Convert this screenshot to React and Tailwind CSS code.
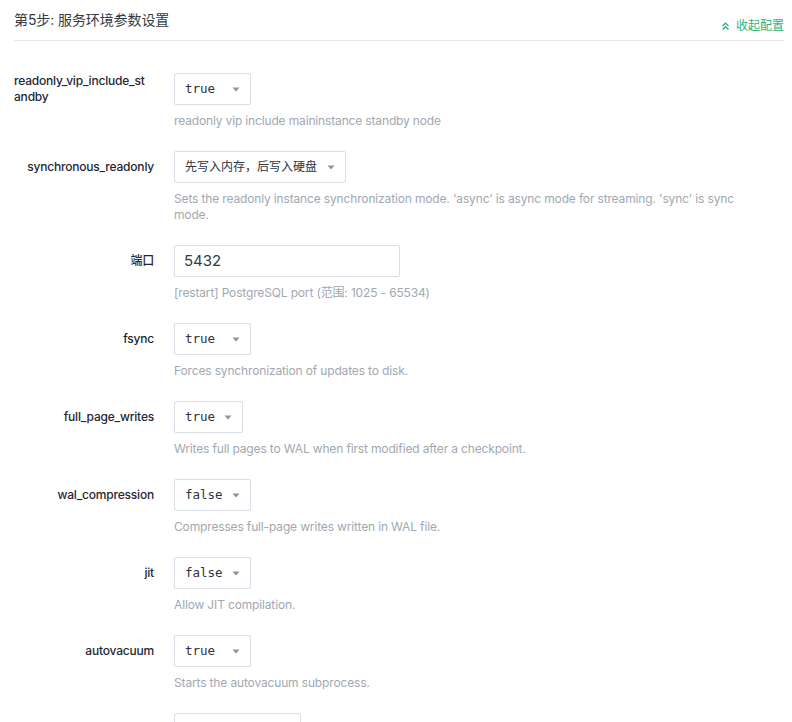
import React from "react";

const FONT = { fontFamily: "Inter, 'Noto Sans CJK SC', sans-serif" };

const params = [
  {
    key: "readonly_vip_include_standby",
    label: "readonly_vip_include_st andby",
    type: "select",
    value: "true",
    width: "w-[77px]",
    desc: "readonly vip include maininstance standby node",
  },
  {
    key: "synchronous_readonly",
    label: "synchronous_readonly",
    type: "select",
    value: "先写入内存，后写入硬盘",
    width: "w-[172px]",
    cjk: true,
    desc: "Sets the readonly instance synchronization mode. 'async' is async mode for streaming. 'sync' is sync mode.",
  },
  {
    key: "port",
    label: "端口",
    type: "input",
    value: "5432",
    desc: "[restart] PostgreSQL port (范围: 1025 - 65534)",
  },
  { key: "fsync", label: "fsync", type: "select", value: "true", width: "w-[77px]", desc: "Forces synchronization of updates to disk." },
  {
    key: "full_page_writes",
    label: "full_page_writes",
    type: "select",
    value: "true",
    width: "w-[69px]",
    desc: "Writes full pages to WAL when first modified after a checkpoint.",
  },
  {
    key: "wal_compression",
    label: "wal_compression",
    type: "select",
    value: "false",
    width: "w-[77px]",
    desc: "Compresses full-page writes written in WAL file.",
  },
  { key: "jit", label: "jit", type: "select", value: "false", width: "w-[77px]", desc: "Allow JIT compilation." },
  { key: "autovacuum", label: "autovacuum", type: "select", value: "true", width: "w-[77px]", desc: "Starts the autovacuum subprocess." },
  { key: "next", label: "", type: "select", value: "", width: "w-[127px]", desc: "" },
];

const Caret = () => (
  <svg width="8" height="5" viewBox="0 0 8 5" className="shrink-0">
    <path d="M0.5 0.5 L7.5 0.5 L4 4.5 Z" fill="#8b939e" />
  </svg>
);

const ChevronsUp = () => (
  <svg width="9" height="9" viewBox="0 0 9 9" fill="none" stroke="#2bb37a" strokeWidth="1.4">
    <path d="M1.5 4 L4.5 1.2 L7.5 4" />
    <path d="M1.5 7.6 L4.5 4.8 L7.5 7.6" />
  </svg>
);

const Field = ({ p }) => {
  if (p.type === "input") {
    return (
      <div className="w-[226px] h-[32px] border border-[#d9dee6] rounded-[2px] px-[9px] flex items-center text-[15px] text-[#333a44]">
        {p.value}
      </div>
    );
  }
  return (
    <div
      className={`${p.width} h-[32px] border border-[#d9dee6] rounded-[2px] pl-[10px] pr-[10px] flex items-center justify-between`}
    >
      <span
        className={p.cjk ? "text-[12px] text-[#2d3440]" : "text-[12.5px] text-[#2d3440]"}
        style={p.cjk ? FONT : { fontFamily: "'DejaVu Sans Mono', monospace" }}
      >
        {p.value}
      </span>
      {p.value && <Caret />}
    </div>
  );
};

export default function App() {
  return (
    <div className="bg-white min-h-screen pl-[14px] pr-[8px]" style={FONT}>
      {/* header */}
      <div className="flex justify-between items-start pt-[10px] pb-[6px] border-b border-[#e3e8ee]">
        <div className="text-[14px] leading-[19px] text-[#333a44] tracking-[-0.1px]">第5步: 服务环境参数设置</div>
        <div className="mt-[8px] flex items-center gap-[6px] text-[12px] leading-[16px] text-[#2bb37a]">
          <ChevronsUp />
          收起配置
        </div>
      </div>

      {/* rows */}
      <div className="pt-[32px]">
        {params.map((p) => (
          <div key={p.key} className="flex items-start gap-[20px] mb-[22px]">
            <div className="w-[140px] shrink-0 h-[32px] flex items-center justify-end">
              <span className="text-[12px] leading-[16px] font-medium text-[#1f2733] break-all tracking-[-0.2px]">
                {p.label}
              </span>
            </div>
            <div className="flex-1 min-w-0">
              <Field p={p} />
              {p.desc && (
                <div className="mt-[8px] text-[12px] leading-[16px] text-[#a1a8b2] max-w-[585px] tracking-[-0.15px]">
                  {p.desc}
                </div>
              )}
            </div>
          </div>
        ))}
      </div>
    </div>
  );
}
